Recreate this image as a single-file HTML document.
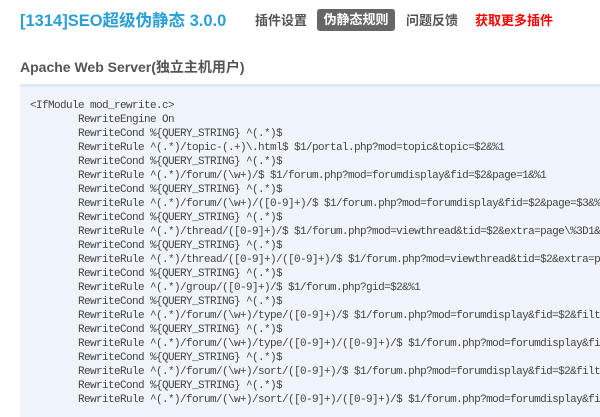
<!DOCTYPE html>
<html><head><meta charset="utf-8"><style>
body{margin:0;width:600px;height:400px;overflow:hidden;background:#fff;font-family:"Liberation Sans","Noto Sans CJK SC",sans-serif;}
.t{position:absolute;left:20px;top:7px;font-size:16.5px;font-weight:bold;color:#2aa0d6;}
.n{position:absolute;top:10px;font-size:13px;font-weight:bold;color:#555;}
.a{position:absolute;left:317px;top:9px;width:78px;height:22px;background:#666;border-radius:3px;color:#fff;font-size:13px;font-weight:bold;text-align:center;line-height:22px;}
.h{position:absolute;left:20px;top:57px;font-size:14px;font-weight:bold;color:#555;}
.c{position:absolute;left:20px;top:84px;width:600px;height:330px;background:#eef4fa;border-top:3px solid #dde9f4;}
pre{margin:0;position:absolute;left:10px;top:12px;font-family:"Liberation Mono",monospace;font-size:11px;line-height:14px;letter-spacing:-0.6px;color:#444;}
</style></head><body>
<div class="t">[1314]SEO超级伪静态 3.0.0</div>
<div class="n" style="left:255px">插件设置</div>
<div class="a">伪静态规则</div>
<div class="n" style="left:406px">问题反馈</div>
<div class="n" style="left:475px;color:#f00">获取更多插件</div>
<div class="h">Apache Web Server(独立主机用户)</div>
<div class="c"><pre>&lt;IfModule mod_rewrite.c&gt;
        RewriteEngine On
        RewriteCond %{QUERY_STRING} ^(.*)$
        RewriteRule ^(.*)/topic-(.+)\.html$ $1/portal.php?mod=topic&amp;topic=$2&amp;%1
        RewriteCond %{QUERY_STRING} ^(.*)$
        RewriteRule ^(.*)/forum/(\w+)/$ $1/forum.php?mod=forumdisplay&amp;fid=$2&amp;page=1&amp;%1
        RewriteCond %{QUERY_STRING} ^(.*)$
        RewriteRule ^(.*)/forum/(\w+)/([0-9]+)/$ $1/forum.php?mod=forumdisplay&amp;fid=$2&amp;page=$3&amp;%1
        RewriteCond %{QUERY_STRING} ^(.*)$
        RewriteRule ^(.*)/thread/([0-9]+)/$ $1/forum.php?mod=viewthread&amp;tid=$2&amp;extra=page\%3D1&amp;%1
        RewriteCond %{QUERY_STRING} ^(.*)$
        RewriteRule ^(.*)/thread/([0-9]+)/([0-9]+)/$ $1/forum.php?mod=viewthread&amp;tid=$2&amp;extra=page
        RewriteCond %{QUERY_STRING} ^(.*)$
        RewriteRule ^(.*)/group/([0-9]+)/$ $1/forum.php?gid=$2&amp;%1
        RewriteCond %{QUERY_STRING} ^(.*)$
        RewriteRule ^(.*)/forum/(\w+)/type/([0-9]+)/$ $1/forum.php?mod=forumdisplay&amp;fid=$2&amp;filter
        RewriteCond %{QUERY_STRING} ^(.*)$
        RewriteRule ^(.*)/forum/(\w+)/type/([0-9]+)/([0-9]+)/$ $1/forum.php?mod=forumdisplay&amp;fid
        RewriteCond %{QUERY_STRING} ^(.*)$
        RewriteRule ^(.*)/forum/(\w+)/sort/([0-9]+)/$ $1/forum.php?mod=forumdisplay&amp;fid=$2&amp;filter
        RewriteCond %{QUERY_STRING} ^(.*)$
        RewriteRule ^(.*)/forum/(\w+)/sort/([0-9]+)/([0-9]+)/$ $1/forum.php?mod=forumdisplay&amp;fid
</pre></div>
</body></html>
